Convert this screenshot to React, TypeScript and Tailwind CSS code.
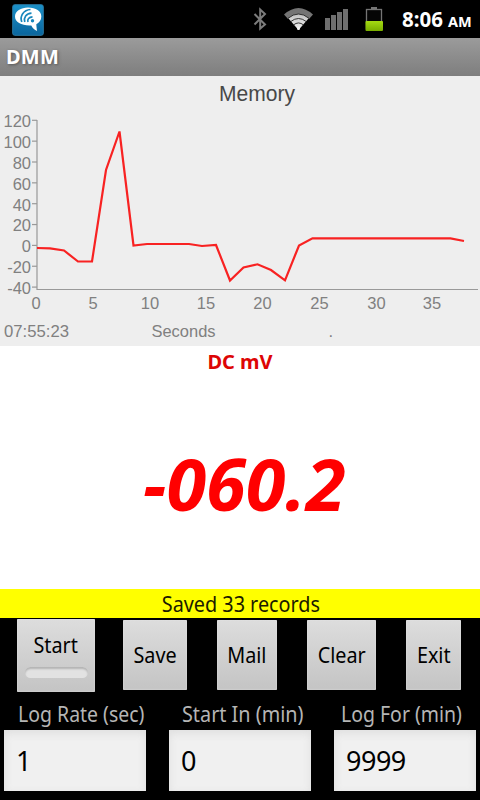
import React from "react";

const yTicks = [120, 100, 80, 60, 40, 20, 0, -20, -40];
const xTicks = [
  { label: "0", x: 36 },
  { label: "5", x: 93 },
  { label: "10", x: 150 },
  { label: "15", x: 206 },
  { label: "20", x: 262.5 },
  { label: "25", x: 319.5 },
  { label: "30", x: 376.5 },
  { label: "35", x: 432 },
];

function StatusBar() {
  return (
    <header className="flex h-[38px] items-center bg-black">
      <svg className="ml-3 mt-px h-8 w-8 shrink-0" viewBox="0 0 32 32">
        <defs>
          <linearGradient id="app" x1="0" y1="0" x2="0" y2="1">
            <stop offset="0" stopColor="#1b91c9" />
            <stop offset="1" stopColor="#0a659d" />
          </linearGradient>
        </defs>
        <rect x="0.7" y="0.7" width="30.6" height="30.6" rx="2" fill="url(#app)" stroke="#2b7ba6" strokeWidth="1" />
        <path d="M16 3.5C24 3.5 29.3 7 29.3 12.6C29.3 16 27.5 18.5 24.3 20.2C24.5 22.8 24.7 24.800 25.1 27C22.500 25.800 20.300 23.800 19.300 21.500C10 22 3 18.500 3 12.600C3 7 9 3.500 16 3.500Z" fill="#fff" />
        <g fill="none" stroke="#1787bd" strokeWidth="1.700">
          <path d="M9.800 18C7.500 12 11.500 6 18.500 5.500" />
          <path d="M12.800 18C11.500 13.500 14 9.500 19.500 9.200" />
          <path d="M16 18C15 15.500 17 13 20.500 12.800" />
        </g>
        <circle cx="20.500" cy="16.700" r="1.700" fill="#1787bd" />
      </svg>
      <div className="flex-1" />
      <svg className="h-[38px] w-[132px] shrink-0" viewBox="252 0 132 38">
        <defs>
          <linearGradient id="wifi" x1="0" y1="0" x2="0" y2="1">
            <stop offset="0" stopColor="#c0c0c0" />
            <stop offset="1" stopColor="#f4f4f4" />
          </linearGradient>
          <linearGradient id="charge" x1="0" y1="0" x2="0" y2="1">
            <stop offset="0" stopColor="#a5db12" />
            <stop offset="1" stopColor="#79ad00" />
          </linearGradient>
        </defs>
        <path d="M254.500 14L265 24.500L260.200 28.500V9.500L265 14L254.500 24.500" fill="none" stroke="#7c7c7c" strokeWidth="2" />
        <path d="M284 14.500Q298.500 1.500 313 14.500L309 19Q298.500 10 288 19Z" fill="#747474" />
        <path d="M288.300 18.300Q298.500 9.500 308.700 18.300L298.500 30Z" fill="url(#wifi)" />
        <g fill="none" stroke="#222" strokeWidth="0.900">
          <path d="M288 18.300Q298.500 9.700 309 18.300" />
          <path d="M290.800 21.500Q298.500 15.500 306.200 21.500" />
          <path d="M293.500 24.900Q298.500 21 303.500 24.900" />
        </g>
        <circle cx="298.500" cy="28.500" r="1.500" fill="#f6f6f6" />
        <g fill="#6f6f6f">
          <rect x="325" y="18" width="5" height="12" />
          <rect x="331" y="15" width="5" height="15" />
          <rect x="337" y="12" width="5" height="18" />
          <rect x="343" y="9" width="5" height="21" />
        </g>
        <rect x="371" y="7" width="6" height="2" fill="#747474" />
        <rect x="366.500" y="9.500" width="15" height="19" fill="#050505" stroke="#747474" strokeWidth="1.300" />
        <rect x="365.500" y="21" width="17.500" height="10" rx="1" fill="url(#charge)" />
      </svg>
      <div className="ml-[18px] flex w-[78px] items-baseline whitespace-nowrap font-bold text-white">
        <span className="text-[20.500px] leading-[38px]">8:06</span>
        <span className="ml-[5px] text-[14.500px]">AM</span>
      </div>
    </header>
  );
}

function Chart() {
  return (
    <svg className="block h-[270px] w-[480px] bg-[#eeeeee]" viewBox="0 76 480 270" fontFamily="'Liberation Sans', Arial, sans-serif">
      <text x="219" y="100.500" fontSize="22" fill="#484848" textLength="76" lengthAdjust="spacingAndGlyphs">Memory</text>
      <path d="M37 120V289.500H478" fill="none" stroke="#999" strokeWidth="1.200" />
      <g fontSize="16.500" fill="#808080">
        {yTicks.map((v, i) => {
          const y = 120.3 + i * 20.85;
          return (
            <g key={v}>
              <path d={`M32 ${y}H37`} stroke="#999" strokeWidth="1.200" />
              <text x="31" y={y + 6.8} textAnchor="end">{v}</text>
            </g>
          );
        })}
        {xTicks.map((t) => (
          <text key={t.label} x={t.x} y="308.500" textAnchor="middle">{t.label}</text>
        ))}
        <text x="4" y="337" textLength="65" lengthAdjust="spacingAndGlyphs">07:55:23</text>
        <text x="151.500" y="337" textLength="64" lengthAdjust="spacingAndGlyphs">Seconds</text>
        <text x="328.500" y="337">.</text>
      </g>
      <polyline
        points="37,248 50,248.300 64,250.500 78,261.500 92,261.500 106,170 119.500,131.500 133.500,245.500 147,244 189,244 202,246 216,245 230,280.500 243.500,267.500 257.500,264.300 271,270 285,280.300 299,245.500 312.500,238.300 450.500,238.300 464,241"
        fill="none"
        stroke="#f82222"
        strokeWidth="2.200"
        strokeLinejoin="miter"
      />
    </svg>
  );
}

const buttonFace =
  "flex items-center justify-center rounded-[1px] bg-linear-to-b from-[#dddddd] to-[#c4c4c4] pb-0.5 text-[22px] text-black shadow-[inset_0_0_2px_#e4e4e4]";

const label = "block whitespace-nowrap origin-center";

function Field({ title, value, inset, scale }: { title: string; value: string; inset: string; scale: string }) {
  return (
    <label className="flex w-[142px] flex-col">
      <span className={`flex h-[31px] items-center pb-0.5 text-[22px] text-[#b5b5b5] ${inset}`}>
        <span className={`block origin-left whitespace-nowrap ${scale}`}>{title}</span>
      </span>
      <input
        defaultValue={value}
        className="h-[61px] w-full bg-[#f0f0f0] pl-3 text-[27px] tracking-[-0.500px] text-black shadow-[inset_0_3px_8px_#dedede] outline-none"
      />
    </label>
  );
}

export default function App() {
  return (
    <main className="flex h-[800px] w-[480px] flex-col overflow-hidden bg-black font-['Noto_Sans','Open_Sans',sans-serif]">
      <StatusBar />
      <div className="flex h-[38px] items-center bg-linear-to-b from-[#9b9b9b] to-[#7e7e7e] pl-1.5 text-[20px] font-bold text-white [text-shadow:1px_1px_3px_#555]">
        <span className="block tracking-[0.200px]">DMM</span>
      </div>
      <Chart />
      <section className="flex h-[243px] flex-col items-center bg-white">
        <div className="h-[30px] text-[20px] font-bold leading-8 text-[#dd0505]">
          <span className="block">DC mV</span>
        </div>
        <div className="mt-[59px] pl-[9px] text-[72px] font-bold italic leading-[96px] text-[#ff0000]">
          <span className="block">-060.2</span>
        </div>
      </section>
      <div className="flex h-[29px] items-center justify-center bg-[#ffff00] pl-0.5 text-[22px] leading-none text-[#1b1b00]">
        <span className={`${label} -mt-0.5 scale-x-90`}>Saved 33 records</span>
      </div>
      <div className="flex h-[81px] items-start pl-[17px] pt-0.5">
        <button className={`${buttonFace} -mt-px h-[73px] w-[78px] flex-col`}>
          <span className={`${label} -mt-0.5 scale-x-90 leading-[30px]`}>Start</span>
          <span className="mt-2 h-[11px] w-[63px] rounded-full bg-[#e2e2e2] shadow-[inset_0_2px_2px_#b4b4b4]" />
        </button>
        <button className={`${buttonFace} ml-7 h-[70px] w-16`}>
          <span className={`${label} scale-x-90`}>Save</span>
        </button>
        <button className={`${buttonFace} ml-[30px] h-[70px] w-[60px]`}>
          <span className={`${label} scale-x-90`}>Mail</span>
        </button>
        <button className={`${buttonFace} ml-[30px] h-[70px] w-[69px]`}>
          <span className={`${label} scale-x-90`}>Clear</span>
        </button>
        <button className={`${buttonFace} ml-[30px] h-[70px] w-[55px]`}>
          <span className={`${label} scale-x-90`}>Exit</span>
        </button>
      </div>
      <div className="flex justify-between px-1">
        <Field title="Log Rate (sec)" value="1" inset="pl-3.5" scale="scale-x-[0.885]" />
        <Field title="Start In (min)" value="0" inset="pl-[13px]" scale="scale-x-90" />
        <Field title="Log For (min)" value="9999" inset="pl-[7px]" scale="scale-x-[0.885]" />
      </div>
    </main>
  );
}
